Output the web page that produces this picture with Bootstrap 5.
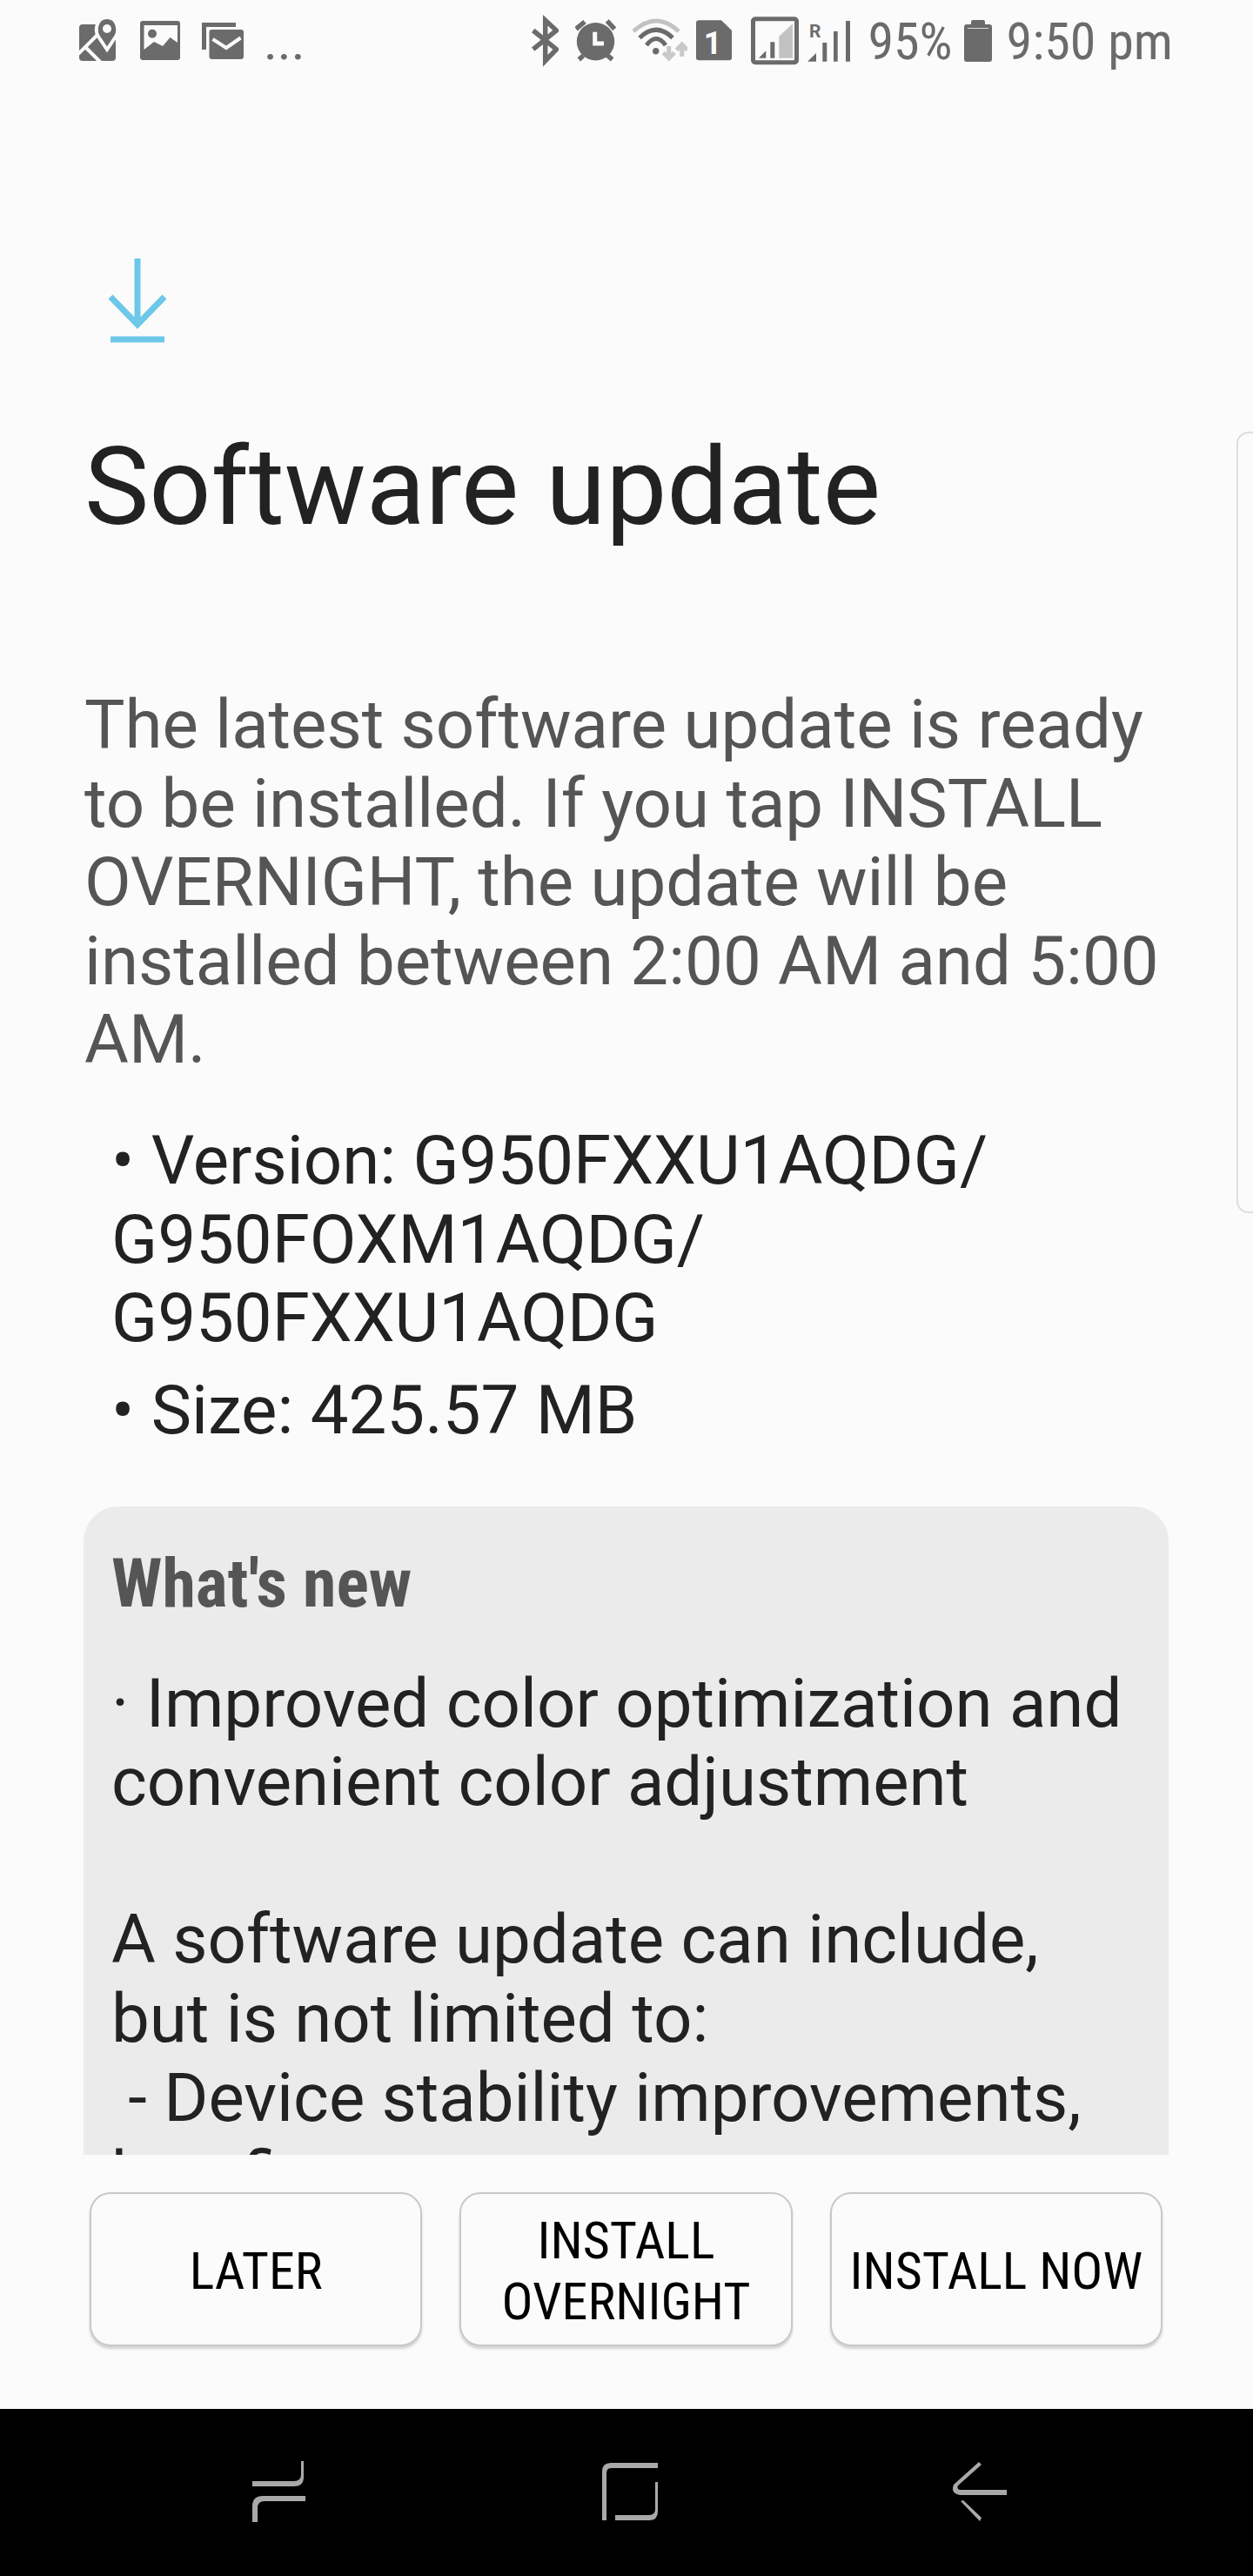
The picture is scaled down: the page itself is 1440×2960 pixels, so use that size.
<!DOCTYPE html>
<html lang="en">
<head>
  <meta charset="UTF-8" />
  <meta name="viewport" content="width=device-width, initial-scale=1" />
  <title>Software update</title>
  <link href="https://cdn.jsdelivr.net/npm/bootstrap@5.3.3/dist/css/bootstrap.min.css" rel="stylesheet" />
  <style>
    html, body {
      height: 2960px;
      overflow: hidden;
    }
    body {
      background-color: #fbfbfb;
      font-family: Roboto, "Liberation Sans", sans-serif;
      font-size: 78px;
      line-height: 90.6px;
    }
    .status-bar {
      flex: 0 0 96px;
      padding: 0 92px 0 91px;
      color: #6b6b6b;
    }
    .status-bar svg {
      display: block;
      height: 96px;
      fill: #6b6b6b;
    }
    .status-text {
      font-size: 60px;
      line-height: 96px;
      font-stretch: 75%;
      white-space: nowrap;
    }
    .status-dots {
      font-size: 60px;
      line-height: 96px;
      margin-left: 23px;
    }
    .update-page {
      flex: 0 0 2380px;
      overflow: hidden;
    }
    .update-icon {
      display: block;
      margin: 201px 0 0 124px;
    }
    .update-title {
      font-family: Roboto, sans-serif;
      font-size: 125px;
      line-height: 150px;
      font-weight: 400;
      color: #222;
      margin: 0 0 0 97px;
      padding-top: 84px;
    }
    .update-intro {
      color: #555;
      margin: 153px 90px 0 97px;
    }
    .update-facts {
      color: #222;
      margin: 48px 90px 0 128px;
    }
    .update-facts div + div {
      margin-top: 15px;
    }
    .whats-new {
      flex: 0 0 745px;
      margin: auto 97px 0 96px;
      overflow: hidden;
      background-color: #ebebeb;
      border-radius: 40px 40px 0 0;
      padding: 44px 32px 0;
      color: #222;
    }
    .whats-new-title {
      font-weight: 700;
      font-stretch: 75%;
      color: #555;
      margin-bottom: 47px;
    }
    .whats-new-body {
      white-space: pre-line;
    }
    .choice-row {
      margin: 43px 104px 0 103px;
      gap: 43px;
    }
    .choice-btn {
      flex: 1 1 0;
      height: 177px;
      background-color: #fbfbfb;
      border: 2px solid #c9c9c9;
      border-radius: 24px;
      box-shadow: 0 3px 3px rgba(0,0,0,.16);
      color: #000;
      font-size: 60px;
      line-height: 70px;
      font-stretch: 75%;
      padding: 4px 0 0;
    }
    .side-handle {
      position: absolute;
      right: 0;
      top: 496px;
      width: 19px;
      height: 898px;
      border: 2px solid #ddd;
      border-right: 0;
      border-radius: 14px 0 0 14px;
    }
    .nav-keys {
      flex: 0 0 192px;
      margin-top: auto;
      padding-left: 290px;
      background-color: #000;
    }
    .nav-keys svg {
      display: block;
      height: 192px;
      fill: #a9a9a9;
    }
  </style>
</head>
<body class="d-flex flex-column">
  <div class="status-bar d-flex justify-content-between align-items-start">
    <div class="d-flex">
      <svg width="44" viewBox="0 0 44 96"><rect y="28" width="42" height="42" rx="4"/><path d="M-2 63 L20 41 M8 55 L27 74" stroke="#fbfbfb" stroke-width="4" fill="none"/><path d="M32 57 L22 42 C18 36 19 20 32 20 C45 20 46 36 42 42 Z" stroke="#fbfbfb" stroke-width="4"/><circle cx="32" cy="33" r="5" fill="#fbfbfb"/></svg>
      <svg style="margin-left:26px" width="46" viewBox="0 0 46 96"><rect y="24" width="46" height="45" rx="3"/><path d="M4.5 29 H43 V49 L34.5 43 L26 53 L16 48 L4.5 57 Z" fill="#fbfbfb"/><circle cx="14" cy="38.7" r="5"/></svg>
      <svg style="margin-left:25px" width="48" viewBox="0 0 48 96"><path d="M0 26 H39 V31 H5 V57 H0 Z"/><rect x="8.5" y="34" width="39.5" height="34" rx="3"/><path d="M12.5 45 L28 55 L44.5 43.5" stroke="#fbfbfb" stroke-width="4" fill="none"/></svg>
      <span class="status-dots">...</span>
    </div>
    <div class="d-flex">
      <svg width="32" viewBox="0 0 32 96"><path d="M2.7 56.7 L29.4 35 L16.7 23.3 V70 L29.4 56.7 L2.7 35" stroke="#6b6b6b" stroke-width="5.5" fill="none"/></svg>
      <svg style="margin-left:19px" width="48" viewBox="0 0 48 96"><circle cx="23.5" cy="47.7" r="21.7"/><path d="M22.7 36.7 V50 H33" stroke="#fbfbfb" stroke-width="5" fill="none"/><path d="M1 33.3 L11 25 M45.3 33.3 L36.7 24 M4.3 68.3 L9.3 64 M42.7 68.3 L36.7 63.3" stroke="#6b6b6b" stroke-width="5.5" fill="none"/></svg>
      <svg style="margin-left:18px" width="63" viewBox="0 0 63 96"><g fill="none" stroke-width="5"><path d="M1 36 Q27 12 53 36" stroke="#c2c2c2"/><path d="M8 43.5 Q27 25 46 43.5" stroke="#6b6b6b"/><path d="M16 52 Q27 37 38 52" stroke="#6b6b6b"/><path d="M41.7 53 V66 M35.5 60.5 L41.7 67 L48 60.5 M56.7 65 V52 M50.5 57.5 L56.7 51 L63 57.5" stroke="#c9c9c9"/></g><circle cx="26.7" cy="58.7" r="3.7"/></svg>
      <svg style="margin-left:10px" width="41" viewBox="0 0 41 96"><path d="M3 23.3 H29 L41 35 V66.3 Q41 69.3 38 69.3 H3 Q0 69.3 0 66.3 V26.3 Q0 23.3 3 23.3 Z"/><text x="19" y="61.7" text-anchor="middle" font-family="Roboto, sans-serif" font-weight="700" font-size="36" fill="#fbfbfb">1</text></svg>
      <svg style="margin-left:22px" width="55" viewBox="0 0 55 96"><rect x="2.5" y="21.8" width="50" height="50" rx="2.5" fill="none" stroke="#6b6b6b" stroke-width="5"/><path d="M9 66.7 L17.3 58.3 V66.7 Z M22.3 48.3 H27.3 V66.7 H22.3 Z"/><path d="M32.3 41.7 L48 27.3 V66.7 H32.3 Z" fill="#c2c2c2"/></svg>
      <svg style="margin-left:10px" width="50" viewBox="0 0 50 96"><text x="2" y="43.3" font-family="Roboto, sans-serif" font-weight="700" font-size="21" fill="#6b6b6b">R</text><path d="M0 70.7 L10 61 V70.7 Z M17.3 49 H22.3 V70.7 H17.3 Z M30 36 H34.7 V70.7 H30 Z M44 24 H49 V70.7 H44 Z"/></svg>
      <span class="status-text" style="margin-left:19px">95%</span>
      <svg style="margin-left:13px" width="32" viewBox="0 0 32 96"><path d="M8 28 V25 Q8 23 10 23 H22 Q24 23 24 25 V28 H29 Q32 28 32 31 V68 Q32 71 29 71 H3 Q0 71 0 68 V31 Q0 28 3 28 Z"/><path d="M4 32.5 H28" stroke="#d8d8d8" stroke-width="1"/></svg>
      <span class="status-text" style="margin-left:17px">9:50 pm</span>
    </div>
  </div>

  <main class="update-page d-flex flex-column">
    <svg class="update-icon flex-shrink-0" width="70" height="104" viewBox="0 0 70 104"><path d="M34 0 V76 M3 44 L34 76 L65 44 M3 93 H65" stroke="#6cc7e8" stroke-width="7" fill="none"/></svg>
    <h1 class="update-title">Software update</h1>
    <p class="update-intro mb-0">The latest software update is ready to be installed. If you tap INSTALL OVERNIGHT, the update will be installed between 2:00 AM and 5:00 AM.</p>
    <div class="update-facts">
      <div>• Version: G950FXXU1AQDG/<br>G950FOXM1AQDG/<br>G950FXXU1AQDG</div>
      <div>• Size: 425.57 MB</div>
    </div>
    <section class="whats-new">
      <div class="whats-new-title">What's new</div>
      <div class="whats-new-body">· Improved color optimization and
convenient color adjustment

A software update can include,
but is not limited to:
&nbsp;- Device stability improvements,
bug fixes</div>
    </section>
  </main>

  <div class="choice-row d-flex">
    <button class="btn choice-btn" type="button">LATER</button>
    <button class="btn choice-btn" type="button">INSTALL<br>OVERNIGHT</button>
    <button class="btn choice-btn" type="button">INSTALL NOW</button>
  </div>

  <div class="side-handle"></div>

  <div class="nav-keys d-flex">
    <svg width="61" viewBox="0 0 61 192"><path d="M59 60 V78 Q59 89 48 89 H0 V83 H48 Q56 83 56 75 V60 Z" /><path d="M61 106 V100 H12 Q0 100 0 112 V130 H6 V114 Q6 106 14 106 Z"/></svg>
    <svg style="margin-left:341px" width="64" viewBox="0 0 64 192"><path d="M64 62 V68 H10 Q5 68 5 74 V128 H0 V72 Q0 62 10 62 Z"/><path d="M61 84 H64 V118 Q64 128 54 128 H15 V122 H54 Q61 122 61 115 Z"/></svg>
    <svg style="margin-left:339px" width="62" viewBox="0 0 62 192"><path d="M30 61 L33 64 L6 88 Q4 92 8 93 H62 V99 H8 Q-3 97 1 87 Z"/><path d="M9 106 L12 105 L33 125 L31 129 Z"/></svg>
  </div>

  <script src="https://cdn.jsdelivr.net/npm/bootstrap@5.3.3/dist/js/bootstrap.bundle.min.js"></script>
</body>
</html>
